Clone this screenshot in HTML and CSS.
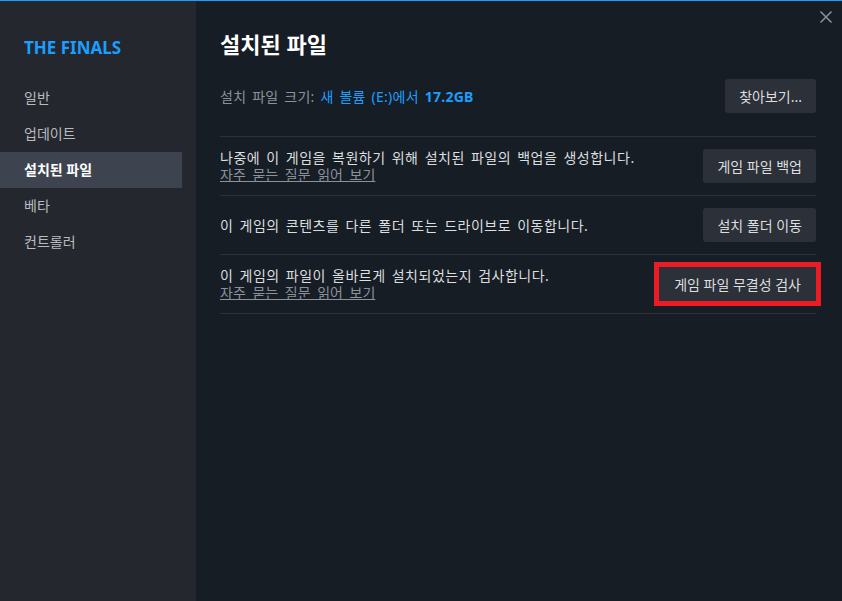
FILE: index.html
```html
<!DOCTYPE html>
<html lang="ko">
<head>
    <meta charset="UTF-8">
    <meta name="viewport" content="width=device-width, initial-scale=1.0">
    <title>THE FINALS - 설치된 파일</title>
    <link rel="stylesheet" href="styles.css">
</head>
<body>

<div class="window">
    <div class="sidebar">
        <div class="brand">THE FINALS</div>
        <ul class="nav">
            <li>일반</li>
            <li>업데이트</li>
            <li class="active">설치된 파일</li>
            <li>베타</li>
            <li>컨트롤러</li>
        </ul>
    </div>

    <div class="main">
        <h1>설치된 파일</h1>

        <div class="size-row">
            <div class="size-text">설치 파일 크기: <span class="accent">새 볼륨 (E:)에서 <b>17.2GB</b></span></div>
            <button class="btn">찾아보기...</button>
        </div>

        <div class="rows">
            <div class="row">
                <div class="desc">
                    <p>나중에 이 게임을 복원하기 위해 설치된 파일의 백업을 생성합니다.</p>
                    <a href="#" class="faq">자주 묻는 질문 읽어 보기</a>
                </div>
                <button class="btn">게임 파일 백업</button>
            </div>
            <div class="row">
                <div class="desc">
                    <p>이 게임의 콘텐츠를 다른 폴더 또는 드라이브로 이동합니다.</p>
                </div>
                <button class="btn">설치 폴더 이동</button>
            </div>
            <div class="row">
                <div class="desc">
                    <p>이 게임의 파일이 올바르게 설치되었는지 검사합니다.</p>
                    <a href="#" class="faq">자주 묻는 질문 읽어 보기</a>
                </div>
                <button class="btn marked">게임 파일 무결성 검사</button>
            </div>
        </div>
    </div>

    <!-- close button sits over the top-right corner -->
    <div class="close">
        <svg width="14" height="14" viewBox="0 0 14 14">
            <path d="M1.5 1.5 L12.5 12.5 M12.5 1.5 L1.5 12.5" stroke="#8b929a" stroke-width="1.5" fill="none"/>
        </svg>
    </div>
</div>

</body>
</html>
```

FILE: styles.css
```css
body {
    font-family: 'Noto Sans', 'Noto Sans CJK KR', sans-serif;
    margin: 0;
    padding: 0;
    background-color: #171d25;
    color: #dcdedf;
    font-size: 14px;
}
.window {
    position: relative;
    display: flex;
    height: 600px;
    border-top: 1px solid #1a9fff;
}
.sidebar {
    width: 196px;
    background-color: #24272e;
    padding-top: 35px;
    flex-shrink: 0;
}
.brand {
    color: #1a9fff;
    font-weight: bold;
    font-size: 17px;
    line-height: 24px;
    padding-left: 24px;
}
.nav {
    list-style: none;
    margin: 20px 14px 0 0;
    padding: 0;
}
.nav li {
    height: 36px;
    line-height: 36px;
    padding-left: 24px;
    color: #b8bcbf;
    font-size: 14px;
}
.nav li.active {
    background-color: #3d4450;
    color: #fff;
    font-weight: bold;
}
.main {
    flex: 1;
    padding: 28px 26px 0 24px;
}
h1 {
    margin: 0;
    font-size: 22px;
    line-height: 30px;
    font-weight: bold;
    color: #fff;
}
.size-row {
    display: flex;
    align-items: center;
    justify-content: space-between;
    margin-top: 20px;
    margin-bottom: 23px;
}
.size-text {
    color: #8b929a;
    word-spacing: 2px;
    letter-spacing: 0.25px;
}
.accent {
    color: #1a9fff;
}
.accent b {
    font-weight: bold;
}
.btn {
    font-family: inherit;
    font-size: 14px;
    color: #dcdedf;
    background-color: #2c3038;
    border: none;
    border-radius: 3px;
    height: 34px;
    padding: 0 14px;
    cursor: pointer;
}
.btn:hover {
    background-color: #3d4450;
}
.btn.marked {
    border-radius: 0;
    outline: 5px solid #ed1c24;
    padding: 0 15px;
}
.rows {
    border-top: 1px solid #2e323a;
}
.row {
    display: flex;
    align-items: center;
    justify-content: space-between;
    padding: 12px 0;
    border-bottom: 1px solid #2e323a;
}
.desc p {
    margin: 0;
    line-height: 17px;
    word-spacing: 2px;
    letter-spacing: 0.5px;
}
.faq {
    display: block;
    line-height: 17px;
    color: #8b929a;
    word-spacing: 3px;
}
.close {
    position: absolute;
    top: 8px;
    right: 9px;
}
```
